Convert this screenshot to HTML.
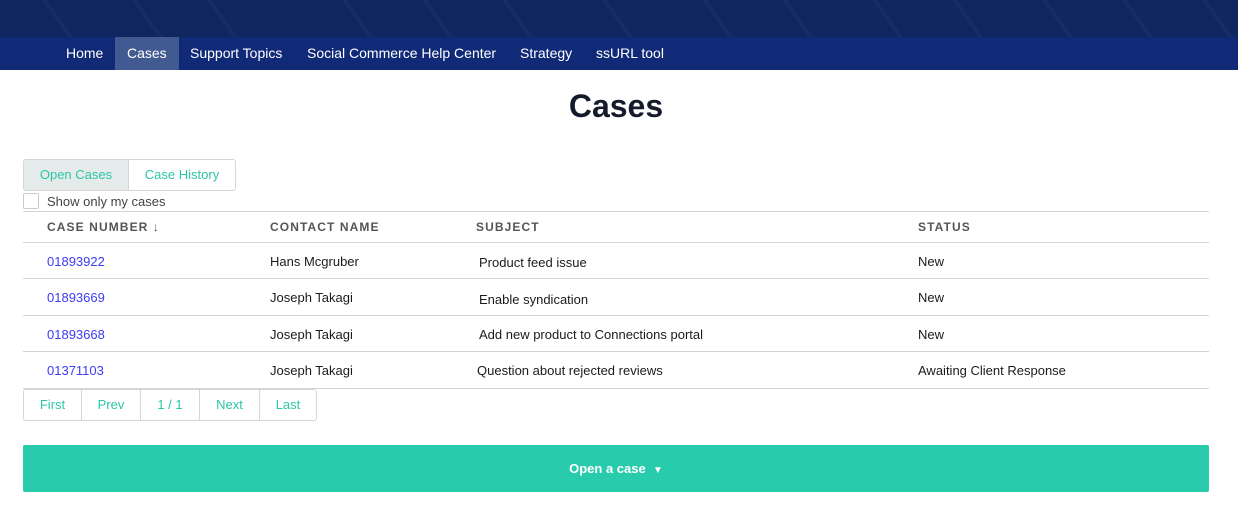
<!DOCTYPE html>
<html><head><style>
*{margin:0;padding:0;box-sizing:border-box}
body{width:1238px;height:526px;background:#fff;font-family:"Liberation Sans",Arial,sans-serif;position:relative;overflow:hidden}
.top{position:absolute;left:0;top:0;width:1238px;height:37px;background:#10265f;overflow:hidden}
.top i{position:absolute;top:-10px;width:4px;height:70px;background:rgba(255,255,255,0.03);transform:rotate(-35deg)}
.nav{position:absolute;left:0;top:37px;width:1238px;height:33px;background:#112a78}
.nav span{position:absolute;top:0;height:33px;line-height:33px;color:#fff;font-size:14px}
.act{background:#425a92;padding:0 12px}
h1{position:absolute;top:88px;left:0;width:1232px;text-align:center;font-size:32px;font-weight:bold;color:#161b2c}
.tabs{position:absolute;left:23px;top:159px;height:32px;width:213px;border:1px solid #d6d6d6;border-radius:3px;overflow:hidden;font-size:13px;color:#2bc7a6}
.tabs div{position:absolute;top:0;height:30px;line-height:30px;text-align:center}
.chk{position:absolute;left:23px;top:193px;width:16px;height:16px;border:1px solid #ccc;border-radius:2px}
.t{position:absolute;font-size:13px;color:#1b1b1b;white-space:nowrap}
.h{font-size:12px;font-weight:bold;letter-spacing:1.1px;color:#555}
.ln{position:absolute;left:23px;width:1186px;height:1px;background:#d4d4d4}
.a{color:#3b3bf5}
.pg{position:absolute;left:23px;top:389px;width:294px;height:32px;border:1px solid #d6d6d6;border-radius:3px;font-size:13px;color:#2bc7a6}
.pg div{position:absolute;top:0;height:30px;line-height:30px;text-align:center;border-right:1px solid #d6d6d6}
.btn{position:absolute;left:23px;top:445px;width:1186px;height:47px;background:#29cbad;border-radius:2px;color:#fff;font-size:13px;font-weight:bold;text-align:center;line-height:47px}
</style></head><body>
<div class="top"><i style="left:60px"></i><i style="left:150px"></i><i style="left:225px"></i><i style="left:360px"></i><i style="left:440px"></i><i style="left:520px"></i><i style="left:620px"></i><i style="left:720px"></i><i style="left:800px"></i><i style="left:890px"></i><i style="left:970px"></i><i style="left:1060px"></i><i style="left:1140px"></i><i style="left:1220px"></i></div>
<div class="nav">
<span style="left:66px">Home</span>
<span class="act" style="left:115px;width:64px">Cases</span>
<span style="left:190px">Support Topics</span>
<span style="left:307px">Social Commerce Help Center</span>
<span style="left:520px">Strategy</span>
<span style="left:596px">ssURL tool</span>
</div>
<h1>Cases</h1>
<div class="tabs"><div style="left:0;width:105px;background:#e5ebea;border-right:1px solid #d6d6d6">Open Cases</div><div style="left:105px;width:106px">Case History</div></div>
<div class="chk"></div>
<div class="t" style="left:47px;top:194px;color:#444">Show only my cases</div>
<div class="ln" style="top:211px"></div>
<div class="t h" style="left:47px;top:220px">CASE NUMBER ↓</div>
<div class="t h" style="left:270px;top:220px">CONTACT NAME</div>
<div class="t h" style="left:476px;top:220px">SUBJECT</div>
<div class="t h" style="left:918px;top:220px">STATUS</div>
<div class="ln" style="top:242px"></div>
<div class="t a" style="left:47px;top:254px">01893922</div><div class="t" style="left:270px;top:254px">Hans Mcgruber</div><div class="t" style="left:479px;top:255px">Product feed issue</div><div class="t" style="left:918px;top:254px">New</div>
<div class="ln" style="top:278px"></div>
<div class="t a" style="left:47px;top:290px">01893669</div><div class="t" style="left:270px;top:290px">Joseph Takagi</div><div class="t" style="left:479px;top:292px">Enable syndication</div><div class="t" style="left:918px;top:290px">New</div>
<div class="ln" style="top:315px"></div>
<div class="t a" style="left:47px;top:327px">01893668</div><div class="t" style="left:270px;top:327px">Joseph Takagi</div><div class="t" style="left:479px;top:327px">Add new product to Connections portal</div><div class="t" style="left:918px;top:327px">New</div>
<div class="ln" style="top:351px"></div>
<div class="t a" style="left:47px;top:363px">01371103</div><div class="t" style="left:270px;top:363px">Joseph Takagi</div><div class="t" style="left:477px;top:363px">Question about rejected reviews</div><div class="t" style="left:918px;top:363px">Awaiting Client Response</div>
<div class="ln" style="top:388px"></div>
<div class="pg"><div style="left:0;width:58px">First</div><div style="left:58px;width:59px">Prev</div><div style="left:117px;width:59px">1 / 1</div><div style="left:176px;width:60px">Next</div><div style="left:236px;width:56px;border-right:none">Last</div></div>
<div class="btn">Open a case &nbsp;<span style="font-size:10px">▼</span></div>
</body></html>
